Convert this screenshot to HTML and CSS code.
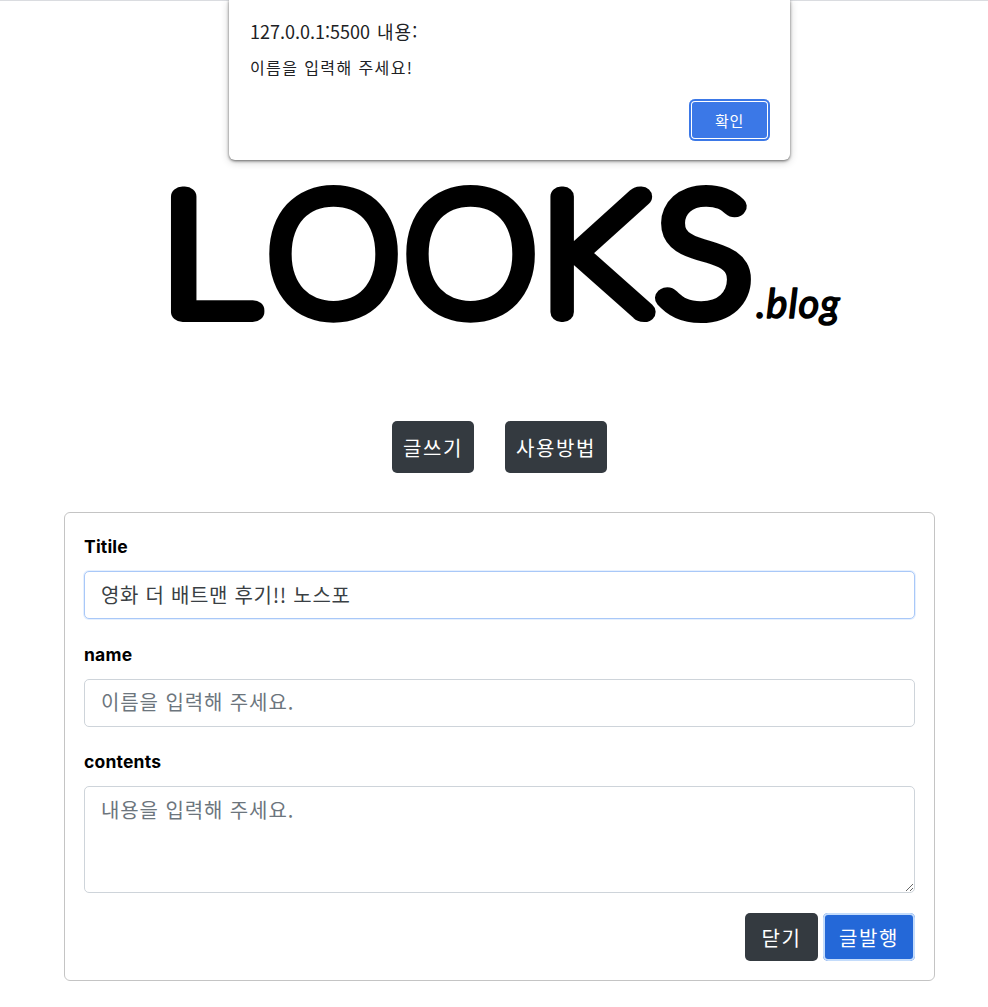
FILE: index.html
```html
<!DOCTYPE html>
<html lang="ko">
<head>
    <meta charset="UTF-8">
    <meta name="viewport" content="width=device-width, initial-scale=1.0">
    <title>LOOKS.blog</title>
    <link rel="stylesheet" href="styles.css">
</head>
<body>
    <div class="top-line"></div>

    <div class="alert-box">
        <div class="alert-title">127.0.0.1:5500 <span class="alert-ko">내용:</span></div>
        <div class="alert-message">이름을 입력해 주세요!</div>
        <div class="alert-actions">
            <button class="alert-ok">확인</button>
        </div>
    </div>

    <header class="logo">
        <svg class="logo-mark" width="988" height="420" viewBox="0 0 988 420" aria-label="LOOKS.blog">
            <text class="logo-word" transform="translate(160.6 311) scale(1.16 1)">L</text>
            <text class="logo-word" transform="translate(268 311) scale(1.02 1)">O</text>
            <text class="logo-word" transform="translate(405 311) scale(1.02 1)">O</text>
            <text class="logo-word" transform="translate(540.7 311) scale(1.07 1)">K</text>
            <text class="logo-word" transform="translate(656 311) scale(1.1 1)">S</text>
            <text class="logo-sub" x="756" y="317">.blog</text>
        </svg>
    </header>

    <nav class="main-nav">
        <button class="btn btn-dark">글쓰기</button>
        <button class="btn btn-dark">사용방법</button>
    </nav>

    <form class="post-form">
        <label class="form-label" for="title">Titile</label>
        <input class="form-control focused" id="title" type="text" value="영화 더 배트맨 후기!! 노스포">

        <label class="form-label" for="name">name</label>
        <input class="form-control" id="name" type="text" placeholder="이름을 입력해 주세요.">

        <label class="form-label" for="contents">contents</label>
        <textarea class="form-control form-area" id="contents" placeholder="내용을 입력해 주세요."></textarea>

        <div class="form-actions">
            <button class="btn btn-dark" type="button">닫기</button>
            <button class="btn btn-primary" type="button">글발행</button>
        </div>
    </form>
</body>
</html>
```

FILE: styles.css
```css
* {
    box-sizing: border-box;
}

body {
    margin: 0;
    background-color: #fff;
    color: #212529;
    font-family: "Noto Sans CJK KR", "Noto Sans", sans-serif;
}

.top-line {
    height: 1px;
    background-color: #dadce0;
}

/* browser alert on top of the page */
.alert-box {
    position: absolute;
    top: 0;
    left: 229px;
    width: 561px;
    height: 160px;
    padding: 18px 20px 0 21px;
    background-color: #fff;
    border-radius: 0 0 6px 6px;
    box-shadow: 0 1px 3px rgba(0, 0, 0, 0.55), 0 2px 8px rgba(0, 0, 0, 0.2);
}

.alert-title {
    font-size: 18px;
    line-height: 26px;
    color: #202124;
}

.alert-ko {
    margin-left: 2px;
    letter-spacing: 1px;
}

.alert-message {
    margin-top: 12px;
    font-size: 16px;
    line-height: 22px;
    letter-spacing: 1.4px;
    color: #202124;
}

.alert-actions {
    display: flex;
    justify-content: flex-end;
    margin-top: 21px;
}

.alert-ok {
    width: 81px;
    height: 42px;
    border: none;
    border-radius: 6px;
    background-color: #3b78e7;
    color: #fff;
    font-family: inherit;
    font-size: 15px;
    letter-spacing: 0.8px;
    box-shadow: inset 0 0 0 2px #3b78e7, inset 0 0 0 3px #fff;
}

.logo {
    height: 420px;
}

.logo-mark {
    display: block;
}

/* thin font with a heavy round stroke gives the even rounded letters */
.logo-word {
    font-family: Lato, sans-serif;
    font-size: 164px;
    font-weight: 100;
    fill: #000;
    stroke: #000;
    stroke-width: 20px;
    stroke-linejoin: round;
    stroke-linecap: round;
}

.logo-sub {
    font-family: Lato, sans-serif;
    font-size: 40px;
    font-weight: 400;
    font-style: italic;
    letter-spacing: 1px;
    fill: #000;
    stroke: #000;
    stroke-width: 1.6px;
    stroke-linejoin: round;
}

.main-nav {
    display: flex;
    justify-content: center;
    gap: 31px;
    margin-bottom: 39px;
    padding-left: 11px;
}

.btn {
    height: 52px;
    padding: 0 11px;
    border: none;
    border-radius: 5px;
    color: #fff;
    font-family: inherit;
    font-size: 20px;
    letter-spacing: 1.6px;
}

.btn-dark {
    background-color: #343a40;
}

.btn-primary {
    background-color: #2468d8;
    box-shadow: inset 0 0 0 2px #c4dcfb;
}

.post-form {
    display: flex;
    flex-direction: column;
    width: 871px;
    margin-left: 64px;
    padding: 21px 19px 19px;
    border: 1px solid #c4c4c4;
    border-radius: 6px;
}

.form-label {
    margin-bottom: 12px;
    font-family: Inter, sans-serif;
    font-size: 17.5px;
    font-weight: 700;
    line-height: 25px;
    letter-spacing: 0.2px;
    color: #000;
}

.form-control {
    display: block;
    width: 100%;
    height: 48px;
    margin-bottom: 22.5px;
    padding: 6px 16px 8px;
    border: 1px solid #ced4da;
    border-radius: 5px;
    color: #3a3f44;
    font-family: inherit;
    font-size: 20px;
    line-height: 30px;
    letter-spacing: 0.7px;
    outline: none;
}

.form-control::placeholder {
    color: #6c757d;
    letter-spacing: 0.9px;
}

.focused {
    border-color: #a9c8f8;
    box-shadow: 0 0 0 1px #e6f0fe;
}

.form-area {
    height: 107px;
    margin-bottom: 20px;
    padding-top: 8px;
    resize: vertical;
}

.form-actions {
    display: flex;
    justify-content: flex-end;
    gap: 5px;
}

.form-actions .btn {
    height: 48px;
    padding: 0 16.5px;
}

.form-actions .btn-primary {
    padding: 0 16px;
}
```
